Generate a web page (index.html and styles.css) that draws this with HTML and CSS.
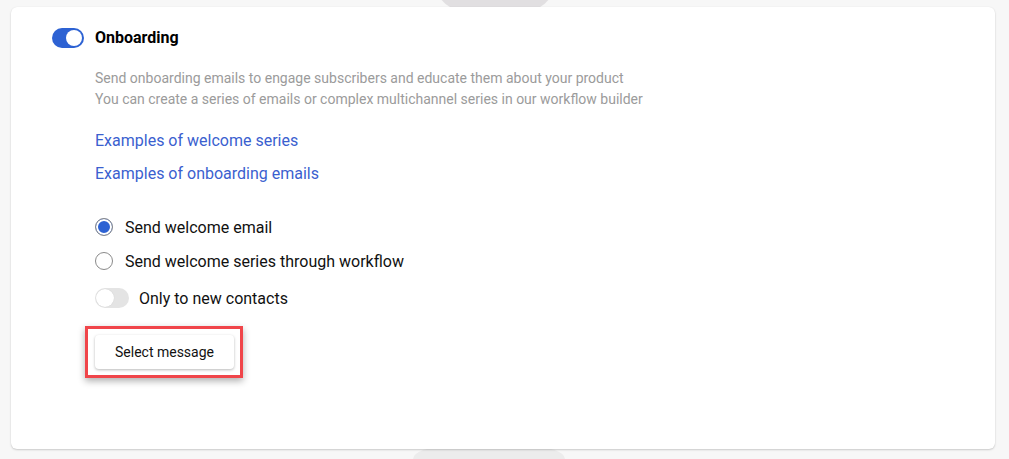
FILE: index.html
```html
<!DOCTYPE html>
<html lang="en">
<head>
<meta charset="utf-8">
<title>Onboarding</title>
<link rel="stylesheet" href="styles.css">
</head>
<body>
<div class="bg-shape bg-top"></div>
<div class="bg-shape bg-bottom"></div>
<main class="card">
  <div class="header">
    <span class="switch switch-on"><span class="knob"></span></span>
    <h2 class="title">Onboarding</h2>
  </div>
  <div class="body">
    <p class="desc">Send onboarding emails to engage subscribers and educate them about your product<br>You can create a series of emails or complex multichannel series in our workflow builder</p>
    <a class="link link-first" href="#">Examples of welcome series</a>
    <a class="link link-second" href="#">Examples of onboarding emails</a>
    <div class="options">
      <label class="option option-first"><span class="radio radio-checked"></span><span>Send welcome email</span></label>
      <label class="option option-second"><span class="radio"></span><span>Send welcome series through workflow</span></label>
      <label class="option option-toggle"><span class="switch switch-off"><span class="knob"></span></span><span>Only to new contacts</span></label>
    </div>
    <div class="highlight">
      <button class="btn" type="button">Select message</button>
    </div>
  </div>
</main>
</body>
</html>
```
FILE: styles.css
```css
html, body {
  margin: 0;
  padding: 0;
}
html {
  overflow: hidden;
}
body {
  background: #f7f7f7;
  font-family: Roboto, "Liberation Sans", Arial, sans-serif;
  width: 1009px;
  height: 459px;
  overflow: hidden;
  position: relative;
  padding-top: 7px;
  box-sizing: border-box;
}
.bg-shape {
  position: absolute;
  z-index: 0;
}
.bg-top {
  left: 433px;
  top: -30px;
  width: 124px;
  height: 40px;
  background: #e1dfe1;
  border-radius: 0 0 28px 28px / 0 0 36px 36px;
}
.bg-bottom {
  left: 413px;
  top: 446px;
  width: 152px;
  height: 13px;
  background: #ececec;
  border-radius: 40px 40px 0 0 / 14px 14px 0 0;
}
.card {
  position: relative;
  z-index: 1;
  margin-left: 11px;
  width: 984px;
  height: 442px;
  box-sizing: border-box;
  background: #fff;
  border-radius: 6px;
  box-shadow: 0 1px 2px rgba(0,0,0,0.18), 0 0 1px rgba(0,0,0,0.08);
  padding: 21px 40px 0 41px;
}
.header {
  display: flex;
  align-items: center;
  gap: 11px;
  height: 20px;
}
.title {
  margin: 0;
  font-size: 16px;
  font-weight: 700;
  color: #000;
  line-height: 20px;
}
.switch {
  position: relative;
  display: inline-block;
  flex: none;
  height: 20px;
  border-radius: 10px;
  box-sizing: border-box;
}
.switch .knob {
  position: absolute;
  top: 2px;
  width: 16px;
  height: 16px;
  border-radius: 50%;
  background: #fff;
}
.switch-on {
  width: 32px;
  background: #2d62d3;
}
.switch-on .knob {
  right: 2px;
}
.switch-off {
  width: 34px;
  background: #e4e4e4;
}
.switch-off .knob {
  left: 1px;
  top: 1px;
  width: 18px;
  height: 18px;
  box-shadow: 0 0 1px rgba(0,0,0,0.15);
}
.body {
  margin-left: 43px;
  display: flex;
  flex-direction: column;
  align-items: flex-start;
}
.desc {
  margin: 20px 0 0;
  font-size: 14px;
  line-height: 21px;
  color: #9b9b9b;
}
.link {
  font-size: 16px;
  line-height: 20px;
  color: #3b5fcf;
  text-decoration: none;
}
.link-first {
  margin-top: 21px;
}
.link-second {
  margin-top: 13px;
}
.options {
  display: flex;
  flex-direction: column;
  margin-top: 31px;
}
.option {
  display: flex;
  align-items: center;
  height: 24px;
  font-size: 16px;
  color: #111;
  gap: 12px;
}
.option-second {
  margin-top: 10px;
}
.option-toggle {
  margin-top: 13px;
  gap: 10px;
}
.radio {
  flex: none;
  width: 18px;
  height: 18px;
  box-sizing: border-box;
  border-radius: 50%;
  border: 1px solid #8a8a8a;
  background: #fff;
}
.radio-checked {
  background: #2d62d3;
  box-shadow: inset 0 0 0 2px #fff;
}
.highlight {
  margin: 16px 0 0 -10px;
  border: 3px solid #f0454a;
  padding: 6px 6px 6px 7px;
  box-shadow: 0 3px 7px rgba(0,0,0,0.32);
}
.btn {
  display: block;
  width: 139px;
  height: 34px;
  border: none;
  border-radius: 4px;
  background: #fff;
  box-shadow: 0 1px 3px rgba(0,0,0,0.28);
  font-family: Roboto, "Liberation Sans", Arial, sans-serif;
  font-size: 14px;
  color: #111;
  cursor: pointer;
}
```
